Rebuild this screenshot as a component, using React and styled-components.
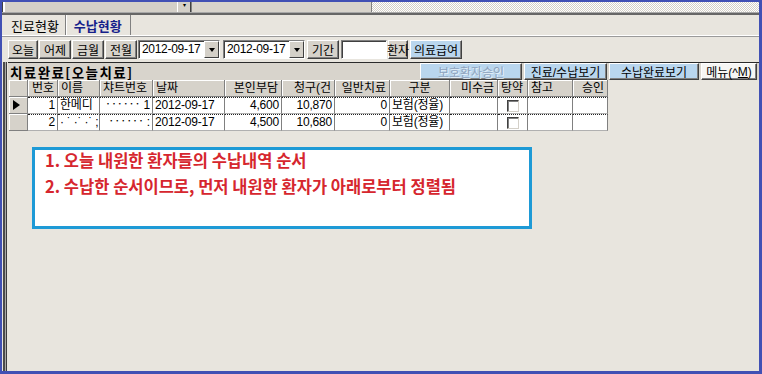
import styled, { createGlobalStyle } from "styled-components";

const GlobalStyle = createGlobalStyle`
    html, body {
        margin: 0;
        padding: 0;
        background: #e8e5de;
    }

    body {
        font-family: "Liberation Sans", "Noto Sans CJK KR", sans-serif;
        font-size: 12px;
        color: #000;
    }
`;

const Frame = styled.div`
    width: 762px;
    height: 374px;
    box-sizing: border-box;
    border: 2px solid #4150b4;
    border-right-width: 3px;
    border-bottom-width: 3px;
    background: #e8e5de;

    display: flex;
    flex-direction: column;
    overflow: hidden;
`;

/* top: leftover of the window above (a scroll strip) */
const TopStrip = styled.div`
    height: 10px;
    display: flex;
    background: #d4d0c8;
`;

const StripLeft = styled.div`
    width: 175px;
    box-shadow: inset 1px 0 #404040, inset 3px 0 #fff;
`;

const StripButton = styled.div`
    width: 14px;
    box-sizing: border-box;
    border-right: 1px solid #404040;
    border-left: 1px solid #fff;
    display: flex;
    justify-content: center;
    align-items: flex-start;
    font-size: 6px;
    line-height: 6px;
    color: #000;
`;

const StripField = styled.div`
    width: 181px;
    box-sizing: border-box;
    border-left: 1px solid #808080;
    border-right: 1px solid #808080;
    background: #d8d4cc;
`;

const StripTrack = styled.div`
    flex: 1;
    background: repeating-conic-gradient(#fff 0 25%, #d4d0c8 0 50%) 0 0 / 2px 2px;
`;

const DarkRule = styled.div`
    height: 2px;
    border-top: 1px solid #a8a8a8;
    background: #666;
`;

const TabBar = styled.div`
    height: 20px;
    display: flex;
    padding-left: 3px;
`;

const Tab = styled.div`
    display: flex;
    align-items: center;
    padding: 0 ${p => (p.$active ? "8px" : "6px")};
    font-size: 13px;
    font-family: "Noto Sans CJK KR", sans-serif;
    font-weight: ${p => (p.$active ? "bold" : "normal")};
    color: ${p => (p.$active ? "#14208a" : "#000")};
    border-right: 1px solid #808080;
    box-shadow: ${p => (p.$active ? "inset 1px 0 #fff" : "none")};
`;

const TabRule = styled.div`
    border-top: 1px solid #fff;
    border-bottom: 1px solid #9a9a9a;
`;

const Toolbar = styled.div`
    display: flex;
    align-items: center;
    gap: 1px;
    padding: 3px 0 0 6px;
    height: 19px;
`;

const Button = styled.div`
    width: ${p => p.$w}px;
    height: ${p => p.$h || 19}px;
    box-sizing: border-box;
    display: flex;
    align-items: center;
    justify-content: center;
    background: ${p => (p.$blue ? "#b9d6ee" : p.$light ? "#f6f6f4" : "#d6d2ca")};
    color: ${p => (p.$disabled ? "#8fa3bd" : "#000")};
    text-shadow: ${p => (p.$disabled ? "1px 1px 0 #e6f0f8" : "none")};
    border: 1px solid;
    border-color: #fff #404040 #404040 #fff;
    box-shadow: inset -1px -1px #808080;
    font-size: 12px;
    white-space: nowrap;
    margin-left: ${p => p.$gap || 0}px;
`;

const Combo = styled.div`
    width: 82px;
    height: 19px;
    box-sizing: border-box;
    display: flex;
    background: #fff;
    border: 1px solid;
    border-color: #808080 #fff #fff #808080;
    box-shadow: inset 1px 1px #404040;
    margin-left: ${p => p.$gap || 0}px;
`;

const ComboText = styled.div`
    flex: 1;
    padding-left: 3px;
    line-height: 17px;
    letter-spacing: -0.3px;
`;

const ComboArrow = styled.div`
    width: 15px;
    background: #d4d0c8;
    border: 1px solid;
    border-color: #fff #404040 #404040 #fff;
    box-sizing: border-box;
    display: flex;
    align-items: center;
    justify-content: center;

    &::after {
        content: "";
        border-left: 3px solid transparent;
        border-right: 3px solid transparent;
        border-top: 4px solid #000;
    }
`;

const TextBox = styled.div`
    width: 46px;
    height: 19px;
    box-sizing: border-box;
    background: #fff;
    border: 1px solid;
    border-color: #808080 #fff #fff #808080;
    box-shadow: inset 1px 1px #404040;
    margin-left: 1px;
`;

const Panel = styled.div`
    flex: 1;
    margin: 3px 0 0 1px;
    padding-left: 5px;
    box-shadow: inset 2px 0 #4a4a4a, inset 3px 0 #a8a8a8, inset 4px 0 #3c3c3c;
    display: flex;
    flex-direction: column;
`;

const SectionBar = styled.div`
    height: 17px;
    display: flex;
    align-items: center;
    border-top: 1px solid #2a2a2a;
    background: #d8d4cc;
    padding-right: 2px;
`;

const SectionTitle = styled.div`
    flex: 1;
    padding-left: 2px;
    font-family: "Noto Sans CJK KR", sans-serif;
    font-weight: bold;
    font-size: 13.5px;
    letter-spacing: 1.4px;
`;

const Grid = styled.div`
    display: grid;
    grid-template-columns: 19px 30px 42px 53px 72px 57px 53px 55px 60px 48px 30px 45px 35px;
    width: 599px;
    margin-left: 1px;
`;

const HeadCell = styled.div`
    height: 17px;
    box-sizing: border-box;
    background: #d6d2ca;
    border-right: 1px solid #808080;
    border-bottom: 1px solid #808080;
    box-shadow: inset 1px 1px #fff;
    padding: 0 3px;
    line-height: 16px;
    text-align: ${p => p.$align || "left"};
    white-space: nowrap;
    overflow: hidden;
`;

const Indicator = styled.div`
    height: 17px;
    box-sizing: border-box;
    background: #d6d2ca;
    border-right: 1px solid #808080;
    border-bottom: 1px solid #808080;
    box-shadow: inset 1px 1px #fff;
    display: flex;
    align-items: center;
    padding-left: 4px;

    &::after {
        content: "";
        display: ${p => (p.$current ? "block" : "none")};
        border-top: 5px solid transparent;
        border-bottom: 5px solid transparent;
        border-left: 7px solid #000;
    }
`;

const Cell = styled.div`
    height: 17px;
    box-sizing: border-box;
    background: #fff;
    border-top: 1px dotted #222;
    border-right: 1px solid #808080;
    border-bottom: 1px solid #b0b0b0;
    padding: 0 2px;
    line-height: 15px;
    text-align: ${p => p.$align || "left"};
    white-space: nowrap;
    overflow: hidden;
    letter-spacing: -0.2px;
`;

const CheckCell = styled(Cell)`
    display: flex;
    justify-content: center;
    align-items: center;
`;

const Check = styled.div`
    width: 12px;
    height: 12px;
    box-sizing: border-box;
    background: #fff;
    border: 1px solid;
    border-color: #404040 #d4d0c8 #d4d0c8 #404040;
    box-shadow: inset 1px 1px #808080;
`;

const Note = styled.div`
    width: 500px;
    height: 82px;
    box-sizing: border-box;
    margin: 16px 0 0 24px;
    border: 3px solid #1e9ad6;
    background: #fff;
    padding: 0 10px;
    color: #d6262e;
    font-family: "Noto Sans CJK KR", sans-serif;
    font-weight: bold;
    font-size: 16.5px;
`;

const NoteLine = styled.div`
    height: 26px;
    line-height: 20px;
    white-space: nowrap;
`;

const columns = [
    { label: "번호", align: "right" },
    { label: "이름" },
    { label: "챠트번호" },
    { label: "날짜" },
    { label: "본인부담", align: "right" },
    { label: "청구(건", align: "right" },
    { label: "일반치료", align: "right" },
    { label: "구분", align: "center" },
    { label: "미수금", align: "right" },
    { label: "탕약" },
    { label: "참고" },
    { label: "승인", align: "right" },
];

const rows = [
    ["1", "한메디", "‥‥‥ 1", "2012-09-17", "4,600", "10,870", "0", "보험(정율)", ""],
    ["2", "· ˙ ·˙ ·˙ ;", "‥‥‥ :", "2012-09-17", "4,500", "10,680", "0", "보험(정율)", ""],
];

export default function App() {
    return (
        <>
            <GlobalStyle />
            <Frame>
                <TopStrip>
                    <StripLeft />
                    <StripButton>▾</StripButton>
                    <StripField />
                    <StripTrack />
                </TopStrip>
                <DarkRule />
                <TabBar>
                    <Tab>진료현황</Tab>
                    <Tab $active>수납현황</Tab>
                </TabBar>
                <TabRule />
                <Toolbar>
                    <Button $w={30}>오늘</Button>
                    <Button $w={32}>어제</Button>
                    <Button $w={32}>금월</Button>
                    <Button $w={32}>전월</Button>
                    <Combo>
                        <ComboText>2012-09-17</ComboText>
                        <ComboArrow />
                    </Combo>
                    <Combo $gap={2}>
                        <ComboText>2012-09-17</ComboText>
                        <ComboArrow />
                    </Combo>
                    <Button $w={32} $gap={1}>기간</Button>
                    <TextBox />
                    <Button $w={20}>환자</Button>
                    <Button $w={52} $blue $gap={1}>의료급여</Button>
                </Toolbar>
                <Panel>
                    <SectionBar>
                        <SectionTitle>치료완료[오늘치료]</SectionTitle>
                        <Button $w={102} $h={17} $blue $disabled>보호환자승인</Button>
                        <Button $w={83} $h={17} $blue $gap={2}>진료/수납보기</Button>
                        <Button $w={90} $h={17} $blue $gap={2}>수납완료보기</Button>
                        <Button $w={56} $h={17} $light $gap={2}>메뉴(^<u>M</u>)</Button>
                    </SectionBar>
                    <Grid>
                        <Indicator />
                        {columns.map(c => (
                            <HeadCell key={c.label} $align={c.align}>{c.label}</HeadCell>
                        ))}
                        {rows.map((r, i) => (
                            <Row key={i} data={r} current={i === 0} />
                        ))}
                    </Grid>
                    <Note>
                        <NoteLine>1. 오늘 내원한 환자들의 수납내역 순서</NoteLine>
                        <NoteLine>2. 수납한 순서이므로, 먼저 내원한 환자가 아래로부터 정렬됨</NoteLine>
                    </Note>
                </Panel>
            </Frame>
        </>
    );
}

function Row({ data, current }) {
    const [no, name, chart, date, own, claim, general, kind, unpaid] = data;
    return (
        <>
            <Indicator $current={current} />
            <Cell $align="right">{no}</Cell>
            <Cell>{name}</Cell>
            <Cell $align="right">{chart}</Cell>
            <Cell>{date}</Cell>
            <Cell $align="right">{own}</Cell>
            <Cell $align="right">{claim}</Cell>
            <Cell $align="right">{general}</Cell>
            <Cell>{kind}</Cell>
            <Cell $align="right">{unpaid}</Cell>
            <CheckCell><Check /></CheckCell>
            <Cell />
            <Cell />
        </>
    );
}
